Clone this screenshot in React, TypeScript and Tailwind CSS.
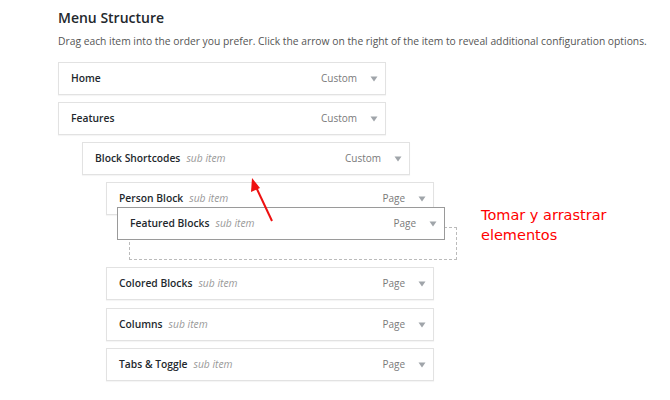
import React from "react";

const Tri = () => (
  <svg width="8" height="6" viewBox="0 0 8 6" className="ml-[13px]">
    <path d="M0.5 0.5 L7.5 0.5 L4 5.5 Z" fill="#a0a5aa" />
  </svg>
);

type ItemProps = { title: string; sub?: boolean; type: string; indent: number; className?: string };

const Item = ({ title, sub, type, indent, className }: ItemProps) => (
  <div
    className={
      "flex h-[33px] w-[328px] items-center bg-white pl-[12px] pr-[7px] " +
      (className ?? "border border-[#e2e2e2] shadow-[0_1px_1px_rgba(0,0,0,0.04)]")
    }
    style={{ marginLeft: indent }}
  >
    <span className="text-[10.3px] font-semibold text-[#23282d]">{title}</span>
    {sub && <span className="ml-[6px] text-[10.3px] italic text-[#999]">sub item</span>}
    <span className="ml-auto text-[10px] text-[#7a7a7a]">{type}</span>
    <Tri />
  </div>
);

export default function App() {
  return (
    <div
      className="relative h-[400px] w-[670px] overflow-hidden bg-white pl-[58px] pt-[8px]"
      style={{ fontFamily: '"Open Sans", "Liberation Sans", sans-serif' }}
    >
      <h2 className="text-[14px] font-semibold leading-[20px] text-[#23282d]">Menu Structure</h2>
      <p className="mt-[5px] whitespace-nowrap text-[10.3px] leading-[16px] text-[#555]">
        Drag each item into the order you prefer. Click the arrow on the right of the item to reveal additional configuration options.
      </p>
      <div className="mt-[13px] flex flex-col">
        <Item title="Home" type="Custom" indent={0} />
        <div className="h-[7px]" />
        <Item title="Features" type="Custom" indent={0} />
        <div className="h-[7px]" />
        <Item title="Block Shortcodes" sub type="Custom" indent={24} />
        <div className="h-[7px]" />
        <Item title="Person Block" sub type="Page" indent={48} />
        <div className="mt-[12px] ml-[71px] h-[33px] w-[328px] border border-dashed border-[#bbb]" />
        <div className="h-[7px]" />
        <Item title="Colored Blocks" sub type="Page" indent={48} />
        <div className="h-[8px]" />
        <Item title="Columns" sub type="Page" indent={48} />
        <div className="h-[7px]" />
        <Item title="Tabs & Toggle" sub type="Page" indent={48} />
      </div>

      <div className="absolute left-[117px] top-[207px]">
        <Item
          title="Featured Blocks"
          sub
          type="Page"
          indent={0}
          className="border border-[#9a9a9a]"
        />
      </div>

      <svg className="absolute left-0 top-0" width="670" height="400" viewBox="0 0 670 400">
        <line x1="272" y1="221" x2="256" y2="187" stroke="#ee1111" strokeWidth="2" />
        <path d="M252 178 L251 192 L260 188 Z" fill="#ee1111" />
      </svg>

      <div
        className="absolute left-[481px] top-[205px] text-[14.5px] leading-[20px] text-[#ff0000]"
        style={{ fontFamily: '"DejaVu Sans", Verdana, sans-serif' }}
      >
        Tomar y arrastrar
        <br />
        elementos
      </div>
    </div>
  );
}
